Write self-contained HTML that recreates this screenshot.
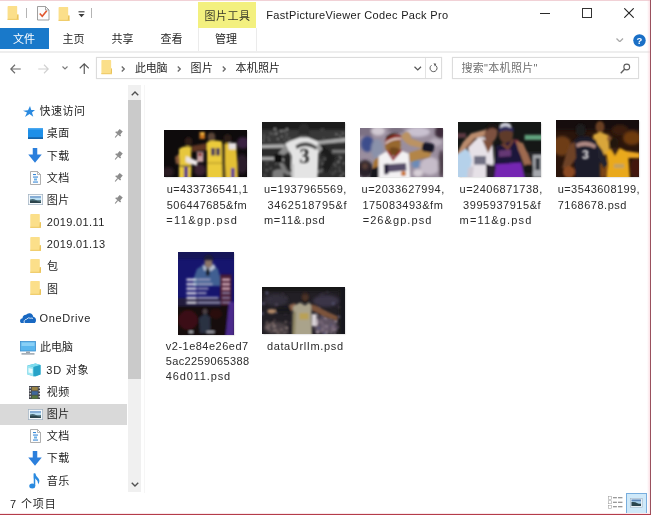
<!DOCTYPE html>
<html lang="zh-CN">
<head>
<meta charset="utf-8">
<title>本机照片</title>
<style>
html,body{margin:0;padding:0;}
body{width:653px;height:516px;overflow:hidden;background:#fff;position:relative;
 font-family:"Liberation Sans","Noto Sans CJK SC",sans-serif;font-size:11px;color:#222;}
.abs{position:absolute;}
svg{position:absolute;display:block;overflow:hidden;}
#win{position:absolute;left:0;top:0;width:650px;height:514px;background:#fff;overflow:hidden;filter:blur(0.35px);}
.t{position:absolute;white-space:nowrap;line-height:16px;height:16px;font-size:11px;color:#1f1f1f;}
.lb{position:absolute;white-space:pre;line-height:16px;height:16px;font-size:11px;color:#2b2b2b;}
#ctxtab{left:198px;top:2px;width:58px;height:26px;background:#f3f07f;}
#ctxl{left:198px;top:28px;width:1px;height:23px;background:#ebebeb;}
#ctxr{left:256px;top:28px;width:1px;height:23px;background:#ebebeb;}
#file{left:0;top:28px;width:49.3px;height:20.5px;background:#1979ca;}
#ribline{left:0;top:51px;width:650px;height:2px;background:#eeeeee;}
.box{position:absolute;border:1px solid #dcdcdc;box-shadow:0 0 1px #e6e6e6;box-sizing:border-box;background:#fff;}
.th{box-shadow:0.5px 0.5px 1.5px rgba(0,0,0,0.28);}
</style>
</head>
<body>
<svg width="0" height="0" style="left:0;top:0">
 <defs>
  <filter id="bl" x="-20%" y="-20%" width="140%" height="140%"><feGaussianBlur stdDeviation="0.8"/></filter>
  <filter id="bl2" x="-20%" y="-20%" width="140%" height="140%"><feGaussianBlur stdDeviation="1.6"/></filter>
 </defs>
</svg>
<div id="win">
  <!-- ===== title bar ===== -->
  <div class="abs" id="ctxtab"></div>
  <div class="abs" id="ctxl"></div><div class="abs" id="ctxr"></div>
    <svg style="left:7px;top:6px" width="12" height="14.3" viewBox="0 0 23 29"><path d="M0.5 1 Q0.5 0 2 0 L19 0 Q20 0 20 1.5 L20 17 L22.5 17 L22.5 28 L0.5 28 Z" fill="#fbdf8a"/><path d="M20 17 L22.5 17 L22.5 28 L19 28 Z" fill="#e9c35c"/><path d="M0.5 26 L22.5 26 L22.5 28.5 L0.5 28.5 Z" fill="#f0cd6c"/></svg>
  <div class="abs" style="left:26px;top:8px;width:1px;height:10px;background:#b4b4b4"></div>
  <svg style="left:37.3px;top:6.3px" width="12.5" height="14.5" viewBox="0 0 25 29"><path d="M1 1 L17 1 L24 8 L24 28 L1 28 Z" fill="#fcfcfc" stroke="#8e8e8e" stroke-width="1.7"/><path d="M17 1 L17 8 L24 8" fill="none" stroke="#8e8e8e" stroke-width="1.5"/><path d="M5.5 15 L10.5 20.5 L19.5 9.5" fill="none" stroke="#e0552c" stroke-width="3.2"/></svg>
  <svg style="left:57.7px;top:6.5px" width="12" height="14.3" viewBox="0 0 23 29"><path d="M0.5 1 Q0.5 0 2 0 L19 0 Q20 0 20 1.5 L20 17 L22.5 17 L22.5 28 L0.5 28 Z" fill="#fbdf8a"/><path d="M20 17 L22.5 17 L22.5 28 L19 28 Z" fill="#e9c35c"/><path d="M0.5 26 L22.5 26 L22.5 28.5 L0.5 28.5 Z" fill="#f0cd6c"/></svg>
  <svg style="left:77.5px;top:11px" width="7" height="7" viewBox="0 0 14 14"><rect x="1" y="0.5" width="12" height="2.2" fill="#3c3c3c"/><path d="M1 6 L13 6 L7 12.5 Z" fill="#3c3c3c"/></svg>
  <div class="abs" style="left:91px;top:8px;width:1px;height:10px;background:#b4b4b4"></div>
  <div class="t" style="left:204.5px;top:7.5px;color:#3a3a2a;letter-spacing:0.5px;">图片工具</div>
  <div class="t" style="left:266.3px;top:7px;letter-spacing:0.33px;color:#1a1a1a;">FastPictureViewer Codec Pack Pro</div>
    <div class="abs" style="left:540px;top:13px;width:10px;height:1px;background:#2a2a2a"></div>
  <div class="abs" style="left:581.5px;top:8px;width:10px;height:10px;border:1px solid #333;box-sizing:border-box"></div>
  <svg style="left:624px;top:8px" width="10" height="10" viewBox="0 0 10 10"><path d="M0.3 0.3 L9.7 9.7 M9.7 0.3 L0.3 9.7" stroke="#222" stroke-width="1.1" fill="none"/></svg>
  <svg style="left:616px;top:37.5px" width="7.5" height="4.5" viewBox="0 0 15 9"><path d="M1 1 L7.5 7.5 L14 1" stroke="#a8a8a8" stroke-width="2.6" fill="none"/></svg>
  <svg style="left:633.3px;top:33.5px" width="13" height="13" viewBox="0 0 26 26"><circle cx="13" cy="13" r="12.5" fill="#1a6fc6"/><text x="13" y="20" text-anchor="middle" font-family="Liberation Sans,sans-serif" font-weight="bold" font-size="19" fill="#fff">?</text></svg>
  <!-- ===== ribbon tabs ===== -->
  <div class="abs" id="file"></div>
  <div class="t" style="left:13px;top:31px;color:#fff;">文件</div>
  <div class="t" style="left:62.5px;top:31px;">主页</div>
  <div class="t" style="left:111.5px;top:31px;">共享</div>
  <div class="t" style="left:160.5px;top:31px;">查看</div>
  <div class="t" style="left:215px;top:31px;">管理</div>
  <div class="abs" id="ribline"></div>
  <!-- ===== address bar ===== -->
  <div class="box" style="left:96px;top:57px;width:346px;height:22px;"></div>
  <div class="abs" style="left:425px;top:58px;width:1px;height:20px;background:#e3e3e3;"></div>
  <div class="box" style="left:452px;top:57px;width:187px;height:22px;"></div>
    <svg style="left:10.2px;top:63.5px" width="11" height="10" viewBox="0 0 22 20"><path d="M10 1.5 L1.5 10 L10 18.5 M2 10 L21.5 10" stroke="#6a6a6a" stroke-width="2.3" fill="none"/></svg>
  <svg style="left:37.7px;top:63.5px" width="11" height="10" viewBox="0 0 22 20"><path d="M12 1.5 L20.5 10 L12 18.5 M20 10 L0.5 10" stroke="#d0d0d0" stroke-width="2.2" fill="none"/></svg>
  <svg style="left:62px;top:66px" width="6" height="4" viewBox="0 0 12 8"><path d="M1 1 L6 6 L11 1" stroke="#7a7a7a" stroke-width="2.2" fill="none"/></svg>
  <svg style="left:78.5px;top:62.7px" width="10.5" height="11.5" viewBox="0 0 21 23"><path d="M1.5 10.5 L10.5 1.7 L19.5 10.5 M10.5 2 L10.5 23" stroke="#555" stroke-width="2.3" fill="none"/></svg>
  <svg style="left:100.7px;top:60.2px" width="11.8" height="14.5" viewBox="0 0 23 29"><path d="M0.5 1 Q0.5 0 2 0 L19 0 Q20 0 20 1.5 L20 17 L22.5 17 L22.5 28 L0.5 28 Z" fill="#fbdf8a"/><path d="M20 17 L22.5 17 L22.5 28 L19 28 Z" fill="#e9c35c"/><path d="M0.5 26 L22.5 26 L22.5 28.5 L0.5 28.5 Z" fill="#f0cd6c"/></svg>
  <svg style="left:121px;top:65.7px" width="4" height="6" viewBox="0 0 8 12"><path d="M1.5 1 L6.5 6 L1.5 11" stroke="#6a6a6a" stroke-width="2.6" fill="none"/></svg>
  <svg style="left:177px;top:65.7px" width="4" height="6" viewBox="0 0 8 12"><path d="M1.5 1 L6.5 6 L1.5 11" stroke="#6a6a6a" stroke-width="2.6" fill="none"/></svg>
  <svg style="left:222px;top:65.7px" width="4" height="6" viewBox="0 0 8 12"><path d="M1.5 1 L6.5 6 L1.5 11" stroke="#6a6a6a" stroke-width="2.6" fill="none"/></svg>
  <svg style="left:414.3px;top:66px" width="7.5" height="5" viewBox="0 0 15 10"><path d="M1 1.5 L7.5 8 L14 1.5" stroke="#555" stroke-width="2.4" fill="none"/></svg>
  <svg style="left:429.3px;top:62.8px" width="9" height="10" viewBox="0 0 18 20"><path d="M12.5 4.2 A7 7 0 1 1 5 4.6" stroke="#5a5a5a" stroke-width="2" fill="none"/><path d="M9 0.5 L14.5 1.5 L12 7 Z" fill="#5a5a5a"/></svg>
  <svg style="left:620px;top:62.8px" width="11" height="11" viewBox="0 0 22 22"><circle cx="13.5" cy="8" r="5.8" stroke="#5f5f5f" stroke-width="2.2" fill="none"/><path d="M9.5 12.2 L1.5 20.5" stroke="#5f5f5f" stroke-width="2.8" fill="none"/></svg>
  <div class="t" style="left:135px;top:60px;letter-spacing:-0.3px;">此电脑</div>
  <div class="t" style="left:190.5px;top:60px;letter-spacing:0.5px;">图片</div>
  <div class="t" style="left:235.5px;top:60px;letter-spacing:0.2px;">本机照片</div>
  <div class="t" style="left:461.5px;top:60px;color:#707070;letter-spacing:0.3px;">搜索"本机照片"</div>
  <!-- ===== nav pane ===== -->
  <div class="abs" style="left:0;top:403.5px;width:127px;height:21.5px;background:#d9d9d9;"></div>
  <div class="t" style="left:39.5px;top:103px;letter-spacing:0.5px;">快速访问</div>
  <div class="t" style="left:46.7px;top:125px;letter-spacing:0.6px;">桌面</div>
  <div class="t" style="left:46.7px;top:147.5px;letter-spacing:0.6px;">下载</div>
  <div class="t" style="left:46.7px;top:169.5px;letter-spacing:0.6px;">文档</div>
  <div class="t" style="left:46.7px;top:191.5px;letter-spacing:0.6px;">图片</div>
  <div class="t" style="left:46.7px;top:214px;letter-spacing:0.38px;">2019.01.11</div>
  <div class="t" style="left:46.7px;top:236px;letter-spacing:0.38px;">2019.01.13</div>
  <div class="t" style="left:47px;top:258px;">包</div>
  <div class="t" style="left:47px;top:280.5px;">图</div>
  <div class="t" style="left:39.5px;top:310px;letter-spacing:0.62px;">OneDrive</div>
  <div class="t" style="left:40px;top:339px;">此电脑</div>
  <div class="t" style="left:46.3px;top:361.5px;letter-spacing:0.8px;">3D 对象</div>
  <div class="t" style="left:46.7px;top:383.5px;letter-spacing:0.6px;">视频</div>
  <div class="t" style="left:46.7px;top:405.5px;letter-spacing:0.6px;">图片</div>
  <div class="t" style="left:46.7px;top:428px;letter-spacing:0.6px;">文档</div>
  <div class="t" style="left:46.7px;top:450px;letter-spacing:0.6px;">下载</div>
  <div class="t" style="left:46.7px;top:472.5px;letter-spacing:0.6px;">音乐</div>
    <svg style="left:23px;top:106px" width="12" height="11" viewBox="0 0 24 22"><path d="M14 0 L16.5 8 L24 8 L18 12.8 L20.5 21.5 L13 16 L4 22 L8 13 L0 9.5 L10 8.5 Z" fill="#2a8ae0"/></svg>
  <svg style="left:27.7px;top:127.5px" width="15" height="11" viewBox="0 0 30 22"><rect x="0" y="0" width="30" height="22" fill="#1d8fe8"/><rect x="0" y="0" width="30" height="3" fill="#4aa8f0"/><rect x="0" y="18.5" width="30" height="3.5" fill="#1663a8"/></svg>
  <svg style="left:113px;top:127.6px" width="10" height="12" viewBox="0 0 20 24"><g transform="rotate(40 10 12)" fill="#8c8c8c"><rect x="6" y="2" width="8" height="9"/><rect x="3.5" y="10" width="13" height="3"/><rect x="9" y="13" width="2.2" height="8"/></g></svg>
  <svg style="left:28.3px;top:147.7px" width="14" height="15" viewBox="0 0 28 30"><path d="M9.5 0 L18.5 0 L18.5 13 L27.5 13 L14 29.5 L0.5 13 L9.5 13 Z" fill="#2b7fdc"/></svg>
  <svg style="left:113px;top:149.8px" width="10" height="12" viewBox="0 0 20 24"><g transform="rotate(40 10 12)" fill="#8c8c8c"><rect x="6" y="2" width="8" height="9"/><rect x="3.5" y="10" width="13" height="3"/><rect x="9" y="13" width="2.2" height="8"/></g></svg>
  <svg style="left:29.6px;top:170.5px" width="11" height="14" viewBox="0 0 22 28"><path d="M1 1 L15 1 L21 7 L21 27 L1 27 Z" fill="#fdfdfd" stroke="#9a9a9a" stroke-width="1.6"/><path d="M15 1 L15 7 L21 7" fill="none" stroke="#9a9a9a" stroke-width="1.4"/><rect x="6" y="6" width="6" height="2.2" fill="#3a8ad8"/><rect x="6" y="11" width="10" height="2.2" fill="#3a8ad8"/><rect x="8" y="15" width="6" height="4" fill="#6ab0e8"/><rect x="6" y="21" width="10" height="2.2" fill="#3a8ad8"/></svg>
  <svg style="left:113px;top:172.2px" width="10" height="12" viewBox="0 0 20 24"><g transform="rotate(40 10 12)" fill="#8c8c8c"><rect x="6" y="2" width="8" height="9"/><rect x="3.5" y="10" width="13" height="3"/><rect x="9" y="13" width="2.2" height="8"/></g></svg>
  <svg style="left:27.6px;top:194px" width="15" height="11" viewBox="0 0 30 22"><rect x="0.7" y="0.7" width="28.6" height="20.6" fill="#f4f8fb" stroke="#9fb0c0" stroke-width="1.4"/><rect x="4" y="4" width="22" height="14" fill="#b9def3"/><rect x="4" y="4" width="22" height="4" fill="#86aed6"/><path d="M4 11 Q10 9 16 12 Q22 13 26 12 L26 18 L4 18 Z" fill="#4a6c76"/><path d="M4 14 Q12 12.5 26 16.5 L26 18 L4 18 Z" fill="#2c444c"/></svg>
  <svg style="left:113px;top:194px" width="10" height="12" viewBox="0 0 20 24"><g transform="rotate(40 10 12)" fill="#8c8c8c"><rect x="6" y="2" width="8" height="9"/><rect x="3.5" y="10" width="13" height="3"/><rect x="9" y="13" width="2.2" height="8"/></g></svg>
  <svg style="left:29.7px;top:214.3px" width="11.3" height="14.2" viewBox="0 0 23 29"><path d="M0.5 1 Q0.5 0 2 0 L19 0 Q20 0 20 1.5 L20 17 L22.5 17 L22.5 28 L0.5 28 Z" fill="#fbdf8a"/><path d="M20 17 L22.5 17 L22.5 28 L19 28 Z" fill="#e9c35c"/><path d="M0.5 26 L22.5 26 L22.5 28.5 L0.5 28.5 Z" fill="#f0cd6c"/></svg>
  <svg style="left:29.7px;top:236.5px" width="11.3" height="14.2" viewBox="0 0 23 29"><path d="M0.5 1 Q0.5 0 2 0 L19 0 Q20 0 20 1.5 L20 17 L22.5 17 L22.5 28 L0.5 28 Z" fill="#fbdf8a"/><path d="M20 17 L22.5 17 L22.5 28 L19 28 Z" fill="#e9c35c"/><path d="M0.5 26 L22.5 26 L22.5 28.5 L0.5 28.5 Z" fill="#f0cd6c"/></svg>
  <svg style="left:29.7px;top:258.7px" width="11.3" height="14.2" viewBox="0 0 23 29"><path d="M0.5 1 Q0.5 0 2 0 L19 0 Q20 0 20 1.5 L20 17 L22.5 17 L22.5 28 L0.5 28 Z" fill="#fbdf8a"/><path d="M20 17 L22.5 17 L22.5 28 L19 28 Z" fill="#e9c35c"/><path d="M0.5 26 L22.5 26 L22.5 28.5 L0.5 28.5 Z" fill="#f0cd6c"/></svg>
  <svg style="left:29.7px;top:281px" width="11.3" height="14.2" viewBox="0 0 23 29"><path d="M0.5 1 Q0.5 0 2 0 L19 0 Q20 0 20 1.5 L20 17 L22.5 17 L22.5 28 L0.5 28 Z" fill="#fbdf8a"/><path d="M20 17 L22.5 17 L22.5 28 L19 28 Z" fill="#e9c35c"/><path d="M0.5 26 L22.5 26 L22.5 28.5 L0.5 28.5 Z" fill="#f0cd6c"/></svg>
  <svg style="left:19.5px;top:312.5px" width="16" height="10.5" viewBox="0 0 32 21"><path d="M6 21 Q0 21 0 15.5 Q0 11 5 10.5 Q5.5 4 12 3.5 Q15 0 19.5 0.5 Q25 1 26.5 7.5 Q32 8.5 32 14.5 Q32 21 25.5 21 Z" fill="#1868c2"/><path d="M9 21 Q6 14 13 12.5 Q16 8 21.5 10.5 Q24 9.5 26 11" fill="none" stroke="#fff" stroke-width="1.6"/></svg>
  <svg style="left:19.5px;top:341px" width="16" height="14" viewBox="0 0 32 28"><rect x="1" y="1" width="30" height="19" fill="#5bb7ee" stroke="#3d8fcc" stroke-width="1.6"/><rect x="3" y="3" width="26" height="7" fill="#8ad0f6"/><rect x="12" y="21" width="8" height="3" fill="#9aa4ae"/><rect x="3" y="24.5" width="26" height="2.6" fill="#8b96a2"/></svg>
  <svg style="left:27.3px;top:362.8px" width="14" height="14" viewBox="0 0 28 28"><path d="M1 5 L17 1 L27 4 L27 23 L17 27 L1 23 Z" fill="#38b7d8"/><path d="M1 5 L17 1 L27 4 L13 8 Z" fill="#7fdcee"/><path d="M1 5 L13 8 L13 27 L1 23 Z" fill="#9be6f2"/><path d="M3 10 L11 12 L11 21 L3 19 Z" fill="#e8fbfd"/><path d="M13 8 L27 4 L27 23 L13 27 Z" fill="#27a3c8"/></svg>
  <svg style="left:28.7px;top:385.6px" width="11.5" height="13.5" viewBox="0 0 23 27"><rect x="0" y="0" width="23" height="27" fill="#45474d"/><rect x="5.5" y="2" width="12" height="7" fill="#9a8446"/><rect x="5.5" y="10.5" width="12" height="7" fill="#3f689c"/><rect x="5.5" y="19" width="12" height="6.5" fill="#56763f"/><g fill="#e4e6ea"><rect x="1.2" y="2" width="2.4" height="3"/><rect x="1.2" y="8" width="2.4" height="3"/><rect x="1.2" y="14" width="2.4" height="3"/><rect x="1.2" y="20" width="2.4" height="3"/><rect x="19.4" y="2" width="2.4" height="3"/><rect x="19.4" y="8" width="2.4" height="3"/><rect x="19.4" y="14" width="2.4" height="3"/><rect x="19.4" y="20" width="2.4" height="3"/></g></svg>
  <svg style="left:27.8px;top:408.5px" width="15" height="11" viewBox="0 0 30 22"><rect x="0.7" y="0.7" width="28.6" height="20.6" fill="#f4f8fb" stroke="#9fb0c0" stroke-width="1.4"/><rect x="4" y="4" width="22" height="14" fill="#b9def3"/><rect x="4" y="4" width="22" height="4" fill="#86aed6"/><path d="M4 11 Q10 9 16 12 Q22 13 26 12 L26 18 L4 18 Z" fill="#4a6c76"/><path d="M4 14 Q12 12.5 26 16.5 L26 18 L4 18 Z" fill="#2c444c"/></svg>
  <svg style="left:29.5px;top:429px" width="11" height="14" viewBox="0 0 22 28"><path d="M1 1 L15 1 L21 7 L21 27 L1 27 Z" fill="#fdfdfd" stroke="#9a9a9a" stroke-width="1.6"/><path d="M15 1 L15 7 L21 7" fill="none" stroke="#9a9a9a" stroke-width="1.4"/><rect x="6" y="6" width="6" height="2.2" fill="#3a8ad8"/><rect x="6" y="11" width="10" height="2.2" fill="#3a8ad8"/><rect x="8" y="15" width="6" height="4" fill="#6ab0e8"/><rect x="6" y="21" width="10" height="2.2" fill="#3a8ad8"/></svg>
  <svg style="left:28.3px;top:450.8px" width="14" height="15" viewBox="0 0 28 30"><path d="M9.5 0 L18.5 0 L18.5 13 L27.5 13 L14 29.5 L0.5 13 L9.5 13 Z" fill="#2b7fdc"/></svg>
  <svg style="left:29.3px;top:472.5px" width="11" height="16" viewBox="0 0 22 32"><ellipse cx="6.5" cy="26" rx="6" ry="5" fill="#2a8ae0"/><rect x="9.5" y="1" width="3" height="25" fill="#2a8ae0"/><path d="M9.5 1 L12.5 1 Q14 7 19 11 Q23 16 18 23 Q19 16 12.5 11 L9.5 11 Z" fill="#2a8ae0"/></svg>
  <!-- scrollbar -->
  <div class="abs" style="left:127.7px;top:85px;width:13.8px;height:407px;background:#f0f0f0;"></div>
  <div class="abs" style="left:127.7px;top:100px;width:13.8px;height:278.5px;background:#cacaca;"></div>
  <div class="abs" style="left:144px;top:85px;width:1px;height:408px;background:#f6f6f6;"></div>
    <svg style="left:131px;top:90.5px" width="8" height="5" viewBox="0 0 16 10"><path d="M1.5 8.5 L8 2 L14.5 8.5" stroke="#505050" stroke-width="2.8" fill="none"/></svg>
  <svg style="left:131px;top:481.5px" width="8" height="5" viewBox="0 0 16 10"><path d="M1.5 1.5 L8 8 L14.5 1.5" stroke="#505050" stroke-width="2.8" fill="none"/></svg>
  <!-- ===== status bar ===== -->
  <div class="t" style="left:10px;top:496px;letter-spacing:0.9px;">7 个项目</div>
    <svg style="left:608px;top:496px" width="15" height="13" viewBox="0 0 27 26" preserveAspectRatio="none"><g fill="none" stroke="#9a9a9a" stroke-width="1"><rect x="0.5" y="0.5" width="6" height="6"/><rect x="0.5" y="9.5" width="6" height="6"/><rect x="0.5" y="18.5" width="6" height="6"/></g><g fill="#7a7a7a"><rect x="9" y="2.5" width="7" height="2"/><rect x="18" y="2.5" width="8" height="2"/><rect x="9" y="11.5" width="7" height="2"/><rect x="18" y="11.5" width="8" height="2"/><rect x="9" y="20.5" width="7" height="2"/><rect x="18" y="20.5" width="8" height="2"/></g></svg>
  <div class="abs" style="left:626px;top:492.5px;width:20.5px;height:21.5px;background:#cfe9f9;border:1px solid #78aede;box-sizing:border-box"></div>
  <svg style="left:630px;top:498px" width="12.5" height="9.5" viewBox="0 0 25 19"><rect x="0.6" y="0.6" width="23.8" height="17.8" fill="#f2f7fb" stroke="#9ab0c4" stroke-width="1.2"/><rect x="3" y="3" width="19" height="13" fill="#a8cfea"/><rect x="3" y="3" width="19" height="3.5" fill="#5e86b8"/><path d="M3 8 Q10 7 15 10.5 Q19 12 22 11.5 L22 16 L3 16 Z" fill="#2b454e"/></svg>
  <!-- ===== thumbnails ===== -->
  <!--THUMBS_BEGIN-->
  <!-- thumb 1: three players in yellow -->
  <svg class="th" style="left:164px;top:130px" width="83" height="47" viewBox="0 0 83 47">
   <rect width="83" height="47" fill="#0e0b0c"/>
   <g filter="url(#bl2)">
    <ellipse cx="79" cy="13" rx="6" ry="6" fill="#3a2142"/>
    <ellipse cx="78" cy="34" rx="6" ry="10" fill="#2a1b2a"/>
    <ellipse cx="4" cy="42" rx="6" ry="5" fill="#2a1c22"/>
    <ellipse cx="36" cy="40" rx="6" ry="6" fill="#3a2030"/>
   </g>
   <g filter="url(#bl)">
    <rect x="35.5" y="2" width="5.5" height="7" fill="#c8731f"/>
    <rect x="36.5" y="2" width="3.5" height="3" fill="#e8b040"/>
    <rect x="33" y="22" width="6.5" height="10" fill="#c9a3a3"/>
    <rect x="34" y="23" width="4" height="3" fill="#8a2a2a"/>
    <!-- centre player's arm across -->
    <path d="M27 16 L43 13 L44 20 L28 22 Z" fill="#5f3624"/>
    <!-- left player -->
    <ellipse cx="24.5" cy="11.5" rx="3.8" ry="4.6" fill="#2e1d16"/>
    <path d="M15 19 Q20 15 27 17 L27.5 36 L27 50 L15 50 L15 36 Z" fill="#e7c73c"/>
    <path d="M11 27 L15 24 L16 34 L12 34 Z" fill="#8a5a3a"/>
    <path d="M22 26 L33.5 31 L33 36 L21.5 32 Z" fill="#ebe5e6"/>
    <rect x="20.2" y="37" width="3.6" height="13" fill="#4e3391"/>
    <rect x="15" y="35.5" width="12.5" height="1.2" fill="#5a4a2a"/>
    <!-- centre player -->
    <ellipse cx="47.5" cy="7" rx="3.8" ry="4.4" fill="#5a4538"/>
    <path d="M43 12 Q50 9.5 58 11.5 L58.5 33 L59 50 L43 50 L43 33 Z" fill="#ebcb3a"/>
    <rect x="47" y="18" width="4" height="7.5" fill="#4a3a5a"/><rect x="52" y="18" width="4" height="7.5" fill="#4a3a5a"/>
    <rect x="43" y="32.5" width="15.5" height="1.2" fill="#b89a2a"/>
    <!-- right player -->
    <ellipse cx="63.5" cy="8.5" rx="4" ry="4.6" fill="#2a1c18"/>
    <path d="M60.5 13.5 L72 13 L73.5 34 L74 50 L61.5 50 L61 34 Z" fill="#e4c036"/>
    <path d="M64.6 12.7 L72.4 13 L72.4 19.6 L65 19.6 Z" fill="#e6e0e2"/>
    <rect x="67" y="38" width="3.6" height="12" fill="#5a3a96"/>
    <rect x="58.7" y="14" width="2" height="34" fill="#1d1320"/>
   </g>
  </svg>
  <!-- thumb 2: grayscale #3 back -->
  <svg class="th" style="left:262px;top:122px" width="83" height="55" viewBox="0 0 83 55">
   <rect width="83" height="55" fill="#2e2e2e"/>
   <g filter="url(#bl)">
    <rect x="-3" y="-3" width="90" height="11" fill="#1f1f1f"/>
    <rect x="-3" y="8" width="90" height="14" fill="#383838"/>
    <circle cx="19.8" cy="14.6" r="1.0" fill="#7c7c7c"/><circle cx="1.1" cy="18.7" r="1.0" fill="#6e6e6e"/><circle cx="15.9" cy="17.0" r="1.1" fill="#7c7c7c"/><circle cx="19.2" cy="9.1" r="1.4" fill="#7c7c7c"/><circle cx="61.5" cy="16.4" r="0.8" fill="#5a5a5a"/><circle cx="25.0" cy="7.4" r="1.3" fill="#7c7c7c"/><circle cx="11.1" cy="12.1" r="0.8" fill="#7c7c7c"/><circle cx="18.0" cy="20.5" r="1.1" fill="#4c4c4c"/><circle cx="28.0" cy="19.8" r="0.8" fill="#4c4c4c"/><circle cx="82.3" cy="16.4" r="0.9" fill="#4c4c4c"/><circle cx="80.1" cy="19.7" r="1.1" fill="#6e6e6e"/><circle cx="22.2" cy="8.7" r="1.1" fill="#7c7c7c"/><circle cx="7.3" cy="18.2" r="1.0" fill="#6e6e6e"/><circle cx="1.7" cy="13.0" r="1.0" fill="#5a5a5a"/><circle cx="3.7" cy="15.6" r="0.8" fill="#4c4c4c"/><circle cx="23.2" cy="10.3" r="0.8" fill="#5a5a5a"/><circle cx="6.4" cy="15.4" r="0.8" fill="#6e6e6e"/><circle cx="80.6" cy="11.1" r="1.0" fill="#5a5a5a"/><circle cx="81.3" cy="11.8" r="1.0" fill="#6e6e6e"/><circle cx="74.4" cy="12.3" r="1.1" fill="#7c7c7c"/><circle cx="78.1" cy="14.1" r="1.1" fill="#6e6e6e"/><circle cx="77.7" cy="13.1" r="1.0" fill="#4c4c4c"/><circle cx="1.7" cy="15.6" r="1.2" fill="#5a5a5a"/><circle cx="29.3" cy="19.8" r="1.2" fill="#4c4c4c"/><circle cx="61.3" cy="7.3" r="0.8" fill="#5a5a5a"/><circle cx="80.0" cy="10.5" r="1.1" fill="#4c4c4c"/><circle cx="14.7" cy="9.6" r="1.3" fill="#4c4c4c"/><circle cx="24.9" cy="12.3" r="1.3" fill="#5a5a5a"/><circle cx="80.6" cy="16.6" r="0.9" fill="#6e6e6e"/><circle cx="27.2" cy="16.5" r="1.2" fill="#5a5a5a"/><circle cx="8.5" cy="11.5" r="1.0" fill="#6e6e6e"/><circle cx="14.1" cy="11.7" r="1.2" fill="#7c7c7c"/><circle cx="22.5" cy="18.0" r="0.8" fill="#6e6e6e"/><circle cx="26.2" cy="18.7" r="1.1" fill="#4c4c4c"/><circle cx="28.2" cy="18.6" r="0.9" fill="#4c4c4c"/><circle cx="24.1" cy="15.0" r="0.8" fill="#7c7c7c"/><circle cx="12.9" cy="7.1" r="1.4" fill="#7c7c7c"/><circle cx="59.5" cy="7.5" r="1.1" fill="#4c4c4c"/><circle cx="70.7" cy="52.6" r="1.5" fill="#3c3c3c"/><circle cx="59.2" cy="38.4" r="0.9" fill="#5e5e5e"/><circle cx="80.2" cy="52.8" r="1.3" fill="#4a4a4a"/><circle cx="69.0" cy="35.7" r="1.3" fill="#5e5e5e"/><circle cx="73.9" cy="44.5" r="1.2" fill="#4a4a4a"/><circle cx="65.2" cy="38.6" r="1.5" fill="#6a6a6a"/><circle cx="77.9" cy="34.4" r="1.1" fill="#4a4a4a"/><circle cx="70.4" cy="51.0" r="1.0" fill="#3c3c3c"/><circle cx="80.9" cy="50.7" r="1.5" fill="#4a4a4a"/><circle cx="69.2" cy="45.6" r="1.2" fill="#3c3c3c"/><circle cx="62.7" cy="46.6" r="1.3" fill="#4a4a4a"/><circle cx="68.8" cy="50.1" r="0.9" fill="#4a4a4a"/><circle cx="76.9" cy="34.0" r="0.9" fill="#6a6a6a"/><circle cx="82.3" cy="51.8" r="1.0" fill="#6a6a6a"/><circle cx="64.5" cy="39.9" r="1.1" fill="#6a6a6a"/><circle cx="71.8" cy="40.9" r="1.0" fill="#3c3c3c"/><circle cx="67.6" cy="35.8" r="0.9" fill="#6a6a6a"/><circle cx="77.5" cy="45.5" r="0.9" fill="#6a6a6a"/><circle cx="72.3" cy="50.2" r="1.2" fill="#4a4a4a"/><circle cx="72.8" cy="42.5" r="1.2" fill="#6a6a6a"/><circle cx="76.5" cy="39.9" r="1.6" fill="#6a6a6a"/><circle cx="68.4" cy="38.4" r="1.3" fill="#4a4a4a"/><circle cx="77.7" cy="37.9" r="1.0" fill="#4a4a4a"/><circle cx="81.3" cy="41.2" r="1.5" fill="#3c3c3c"/><circle cx="59.3" cy="48.2" r="1.6" fill="#6a6a6a"/><circle cx="74.0" cy="49.1" r="1.3" fill="#4a4a4a"/><circle cx="77.9" cy="48.8" r="1.2" fill="#5e5e5e"/><circle cx="76.9" cy="34.0" r="1.0" fill="#4a4a4a"/><circle cx="73.8" cy="41.3" r="1.5" fill="#3c3c3c"/><circle cx="78.7" cy="35.7" r="1.5" fill="#6a6a6a"/><circle cx="78.6" cy="54.0" r="1.3" fill="#4a4a4a"/><circle cx="57.0" cy="49.9" r="1.3" fill="#5e5e5e"/><circle cx="58.9" cy="49.5" r="1.6" fill="#4a4a4a"/><circle cx="70.9" cy="52.1" r="1.0" fill="#4a4a4a"/><circle cx="62.5" cy="37.0" r="1.1" fill="#6a6a6a"/><circle cx="62.8" cy="46.2" r="1.6" fill="#6a6a6a"/><circle cx="82.1" cy="41.3" r="1.1" fill="#6a6a6a"/><circle cx="78.8" cy="54.3" r="1.2" fill="#6a6a6a"/><circle cx="60.2" cy="41.8" r="1.5" fill="#5e5e5e"/><circle cx="58.6" cy="49.5" r="1.5" fill="#6a6a6a"/><circle cx="15.2" cy="52.9" r="1.0" fill="#5e5e5e"/><circle cx="3.8" cy="47.7" r="1.6" fill="#3c3c3c"/><circle cx="17.5" cy="52.8" r="1.3" fill="#3c3c3c"/><circle cx="23.1" cy="44.6" r="1.1" fill="#6a6a6a"/><circle cx="5.2" cy="48.5" r="1.1" fill="#6a6a6a"/><circle cx="20.1" cy="42.2" r="1.6" fill="#6a6a6a"/><circle cx="18.2" cy="43.1" r="1.3" fill="#4a4a4a"/><circle cx="12.5" cy="50.8" r="1.5" fill="#6a6a6a"/><circle cx="20.4" cy="53.2" r="0.9" fill="#5e5e5e"/><circle cx="23.2" cy="49.7" r="1.4" fill="#4a4a4a"/><circle cx="24.9" cy="52.8" r="1.1" fill="#5e5e5e"/><circle cx="20.2" cy="42.1" r="1.3" fill="#4a4a4a"/><circle cx="23.4" cy="43.8" r="1.5" fill="#3c3c3c"/><circle cx="4.8" cy="41.4" r="1.5" fill="#4a4a4a"/><circle cx="2.4" cy="52.5" r="1.1" fill="#3c3c3c"/><circle cx="11.8" cy="51.0" r="1.1" fill="#4a4a4a"/><circle cx="8.7" cy="46.5" r="1.2" fill="#5e5e5e"/><circle cx="16.8" cy="51.1" r="1.2" fill="#5e5e5e"/><circle cx="14.2" cy="41.8" r="1.1" fill="#6a6a6a"/><circle cx="2.9" cy="53.3" r="1.5" fill="#4a4a4a"/><circle cx="13.7" cy="50.5" r="1.4" fill="#3c3c3c"/><circle cx="19.7" cy="44.4" r="1.4" fill="#3c3c3c"/><circle cx="2.8" cy="54.2" r="1.1" fill="#4a4a4a"/><circle cx="17.3" cy="47.6" r="0.9" fill="#3c3c3c"/><circle cx="17.6" cy="48.5" r="1.0" fill="#5e5e5e"/>
    <path d="M-3 23 L26 22.5 L26 25.5 L-3 26 Z" fill="#bdbdbd"/>
    <path d="M56 19 L86 15.5 L86 19.5 L56 22.5 Z" fill="#a8a8a8"/>
    <rect x="-3" y="26.5" width="30" height="8" fill="#2a2a2a"/>
    <rect x="58" y="22.5" width="28" height="6" fill="#2c2c2c"/>
    <rect x="-3" y="35" width="15" height="3.4" fill="#a8a8a8"/>
    <rect x="20" y="35.5" width="8" height="3.4" fill="#c4c4c4"/>
    <rect x="70" y="27.7" width="16" height="3.6" fill="#747474"/>
    <path d="M10.6 49 Q16 45.5 21 48 L22 58 L10 58 Z" fill="#7c7c7c"/>
    <!-- arms -->
    <path d="M24.5 20 L31 19 L28 29 L21 33.5 L16 32 Z" fill="#8c8c8c"/>
    <path d="M16 40 L21 40.5 L25 48 L29 50 L29 54 L21 51 Z" fill="#7a7a7a"/>
    <rect x="12" y="32" width="8.5" height="9" rx="2" fill="#111"/>
    <path d="M21 35 L28 33 L29 47 L24.5 46 Z" fill="#232323"/>
    <path d="M57 22 L61 24 L70 31 L73 36 L68 47 L63 50 L60 44 L65 36 L59 31 Z" fill="#1d1d1d"/>
    <!-- head -->
    <ellipse cx="42" cy="9" rx="5.8" ry="7.6" fill="#2b2b2b"/>
    <rect x="37.5" y="13" width="8" height="6" fill="#4c4c4c"/>
    <!-- jersey -->
    <path d="M23.5 22 L28 19 L38 15.5 L46 15.5 L56 19.5 L60 27 L56.5 31 L55.5 58 L29 58 L29.5 34 Z" fill="#e4e4e4"/>
    <path d="M56 20 L60 27 L57 31 L55 26Z" fill="#9a9a9a"/>
    <path d="M29 42 L32 42 L32 58 L29 58Z" fill="#c4c4c4"/>
    <path d="M33.5 23.5 Q43.5 16.5 55 24.5 L54 28 Q43.5 21 34.5 27 Z" fill="#4a4a4a"/>
   </g>
   <text x="37.5" y="41" font-family="Liberation Serif,serif" font-weight="bold" font-size="20" fill="#262626" filter="url(#bl)">3</text>
  </svg>
  <!-- thumb 3: 76ers white jersey, hand to ear -->
  <svg class="th" style="left:360px;top:128px" width="83" height="49" viewBox="0 0 83 49">
   <rect width="83" height="49" fill="#9a8e9e"/>
   <g filter="url(#bl2)">
    <rect x="-4" y="-4" width="18" height="12" fill="#7d7184"/>
    <ellipse cx="7.5" cy="16" rx="6.5" ry="8" fill="#3e4d8c"/>
    <ellipse cx="17" cy="21" rx="6" ry="10" fill="#8a92aa"/>
    <ellipse cx="18" cy="3" rx="7" ry="4.5" fill="#d2cad3"/>
    <ellipse cx="5" cy="41" rx="8" ry="9" fill="#2c2129"/>
    <ellipse cx="5" cy="38" rx="3" ry="3" fill="#5a4038"/>
    <ellipse cx="58" cy="4" rx="12" ry="5" fill="#c9c1d0"/>
    <ellipse cx="80" cy="4" rx="5" ry="7" fill="#3c2c3a"/>
    <ellipse cx="76" cy="14" rx="6" ry="4" fill="#b8adbb"/>
    <ellipse cx="70" cy="38" rx="10" ry="9" fill="#c6bcc9"/>
    <ellipse cx="62" cy="28" rx="5" ry="3" fill="#8c7383"/>
    <ellipse cx="56" cy="35.5" rx="4.2" ry="5" fill="#6c8bb8"/>
    <ellipse cx="58" cy="45" rx="5" ry="4" fill="#d8d0d8"/>
    <ellipse cx="81.5" cy="36" rx="3" ry="14" fill="#4c3c4a"/>
    <ellipse cx="36" cy="2" rx="8" ry="3" fill="#7a6f80"/>
   </g>
   <g filter="url(#bl)">
    <!-- upper arm + forearm -->
    <path d="M48.6 25 L58 22 L66 20 L72 23 L69.6 29 L60 31 L50 34 Z" fill="#b38546"/>
    <path d="M41 9 Q43 4 48 4 L50.5 7 L51 10.5 L64 15 L62.5 20.5 L50 17.5 L45 14 Z" fill="#bb9364"/>
    <rect x="62" y="15" width="12" height="9" rx="3" fill="#181626" transform="rotate(10 68 19.5)"/>
    <!-- head -->
    <ellipse cx="33" cy="17" rx="7.8" ry="10.2" fill="#97672f"/>
    <path d="M29.5 20 Q34.5 18 39.5 21 L38.5 26 Q34.5 29 30.5 26Z" fill="#71471f"/>
    <path d="M25 13 Q31 4.5 41 7.6 L41.3 12.6 Q32 10 25.6 17 Z" fill="#8b2a24"/>
    <path d="M25.3 14.8 Q32 9 41.2 10 L41.2 11.6 Q32 10.8 25.6 16.4 Z" fill="#e9dcd6"/>
    <path d="M26 9.6 Q32 2.8 40.5 6.2 Q32 5.2 26.5 11.6Z" fill="#2b1c18"/>
    <!-- left shoulder / sleeve -->
    <path d="M14 33 L20 27.5 L23 52 L10 52 Z" fill="#a67232"/>
    <path d="M11 41 L20.5 38 L22 52 L9 52 Z" fill="#17151c"/>
    <!-- jersey -->
    <path d="M18.5 28 L27 23 L33 31 L41 22.5 L48.6 25.5 L50.5 52 L18.5 52 Z" fill="#f3f1f3"/>
    <path d="M26.5 23 L33 33 L42.5 22.5 L40.5 21.5 L33 30 L28.5 22 Z" fill="#9c2c2c"/>
    <path d="M23.8 36.5 L46 35 L46.5 42.5 L24.3 44.5 Z" fill="#34284a" opacity="0.82"/>
    <path d="M24 37 L28 35.5 L28.5 46 L24.5 46.5Z" fill="#241a34"/>
    <ellipse cx="43.5" cy="45.5" rx="2.6" ry="2.6" fill="#c9773a"/>
   </g>
  </svg>
  <!-- thumb 4: white jersey + purple jersey -->
  <svg class="th" style="left:458px;top:122px" width="83" height="55" viewBox="0 0 83 55">
   <rect width="83" height="55" fill="#151716"/>
   <g filter="url(#bl)">
    <rect x="-3" y="11" width="11" height="5" fill="#5a3840"/>
    <rect x="66.6" y="12.8" width="20" height="5.2" fill="#5fa07c"/>
    <rect x="60" y="30" width="26" height="28" fill="#25272a"/>
    <rect x="75" y="33" width="11" height="22" fill="#a6a8ad"/>
    <rect x="77.5" y="36" width="4.5" height="12" fill="#33343c"/>
    <!-- left player arm -->
    <path d="M-2 33 L5 20 L13 11.5 L28 7.5 L29 13.5 L16 17 L9 25 L3 36 Z" fill="#b98b6d"/>
    <path d="M9 24 L17 17 L21 22 L18 32 L11 32 Z" fill="#7b4c39"/>
    <!-- sleeve -->
    <path d="M-3 34 L8 26.5 L15 34 L12 58 L-3 58 Z" fill="#b5d1ea"/>
    <!-- white jersey -->
    <path d="M10 26 L20 15.5 L26 15 L35 24 L36 40 L31 58 L10 58 L14 38 Z" fill="#e6e1e7"/>
    <path d="M24 17 L30 31 L35.5 21 Z" fill="#7e503b"/>
    <path d="M16 34 L28 34 L28 42.6 L16 42.6 Z" fill="#4a4862" opacity="0.75"/>
    <path d="M10 46 L16 44 L14 58 L9 58Z" fill="#cfc9d3"/>
    <!-- heads -->
    <ellipse cx="33" cy="11.5" rx="6.3" ry="9.5" fill="#7d5140" transform="rotate(12 33 11.5)"/>
    <path d="M28 5 Q34 -2 41 5 L40 9 Q34 3 28.5 9Z" fill="#1b1412"/>
    <ellipse cx="48" cy="12" rx="7.2" ry="9.6" fill="#5e3b2b"/>
    <path d="M41 5.5 Q48 1 55.5 5.5 L55.5 10 Q48 6.5 41 10.5 Z" fill="#2c2a5c"/>
    <path d="M42 2.5 Q47.5 -1.5 53 2.5 L53 6 Q47.5 2.5 42 6Z" fill="#cfd0dc"/>
    <!-- right player -->
    <path d="M38 24 L46 22 L57 17 L62 22 L63 41 L36 43 L38 34 Z" fill="#1f153a"/>
    <path d="M36 42.5 L63 40.5 L67 58 L34 58 Z" fill="#7428b2"/>
    <path d="M42.5 22 L50 29 L56.5 18 L54 17 L50 24 L46 21Z" fill="#6e4030"/>
    <path d="M41 28.5 L53 27.7 L53 34.3 L41 35 Z" fill="#6d3b7b" opacity="0.9"/>
    <path d="M56 17 L61 18 L62 23 L58 22Z" fill="#7a2a3a"/>
    <path d="M58 19 L65 21 L69 30 L74 43 L67 45 L63 34 L60 27 Z" fill="#9f6a50"/>
    <rect x="66.6" y="42.6" width="8.6" height="8.4" rx="2" fill="#161314"/>
    <path d="M28 42 L38 44 L36 58 L28 58 Z" fill="#2a2233"/>
   </g>
  </svg>
  <!-- thumb 5: navy #3 vs yellow -->
  <svg class="th" style="left:556px;top:120px" width="83" height="57" viewBox="0 0 83 57">
   <rect width="83" height="57" fill="#2a150b"/>
   <g filter="url(#bl2)">
    <rect x="-4" y="-4" width="92" height="14" fill="#160c08"/>
    <ellipse cx="6" cy="26" rx="10" ry="10" fill="#6e3d16"/>
    <ellipse cx="76" cy="18" rx="9" ry="7" fill="#6e3a10"/>
    <ellipse cx="64" cy="10" rx="8" ry="5" fill="#3a1c0c"/>
    <ellipse cx="46" cy="50" rx="8" ry="8" fill="#7a4418"/>
    <ellipse cx="80" cy="48" rx="6" ry="10" fill="#42180a"/>
   </g>
   <g filter="url(#bl)">
    <!-- back yellow player -->
    <ellipse cx="44" cy="7" rx="4.5" ry="6" fill="#6a3f22"/>
    <path d="M37 15 L44 12 L52 15 L54 34 L40 36 Z" fill="#d9a63a"/>
    <path d="M52 14 L58 20 L56 24 L51 20Z" fill="#8a5a30"/>
    <!-- right yellow player -->
    <ellipse cx="58" cy="23" rx="4.5" ry="5.5" fill="#241610"/>
    <path d="M50 32 L56 28 L64 28 L72 32 L74 60 L50 60 L52 44 Z" fill="#e9a91f"/>
    <path d="M70 31 L84 33 L84 38 L72 38 Z" fill="#e8a520"/>
    <path d="M54 28 L59 36 L64 28 Z" fill="#3a2214"/>
    <rect x="58" y="44" width="10" height="4" fill="#b8a070" opacity="0.8"/>
    <!-- navy player -->
    <ellipse cx="24.7" cy="10" rx="5.2" ry="6.6" fill="#1c1a1c"/>
    <path d="M14 24 L22 17 L32 16 L40 20 L44 34 L44 60 L20 60 L18 40 Z" fill="#1a1a2c"/>
    <path d="M14 24 L19 22 L20 38 L12 50 L6 48 L10 34 Z" fill="#6e4226"/>
    <path d="M40 22 L46 30 L52 44 L48 48 L42 38 Z" fill="#20202e"/>
    <ellipse cx="13" cy="52" rx="6" ry="6" fill="#8a4a22"/>
    <path d="M20 24 Q30 19 40 25 L39 28.5 Q30 23.5 21 27.5 Z" fill="#b08a84"/>
   </g>
   <text x="25.8" y="38.5" font-family="Liberation Sans,sans-serif" font-weight="bold" font-size="13" fill="#efecec" filter="url(#bl)">3</text>
  </svg>
  <!-- thumb 6: tall poster -->
  <svg class="th" style="left:178px;top:251.5px" width="55.5" height="83" viewBox="0 0 55.5 83">
   <rect width="56" height="83" fill="#16156e"/>
   <g filter="url(#bl)">
    <rect x="-3" y="-3" width="62" height="10" fill="#121258"/>
    <!-- person -->
    <path d="M15.4 27 L19 17 L26 12.5 L35 12.5 L40 17 L42.5 27 L42.5 34 L15.4 34 Z" fill="#3f5f92"/>
    <path d="M24.5 12 L28.5 16 L32 15 L36 12 L37.5 15.5 L33 19 L26 18.5 Z" fill="#b9c3d6"/>
    <ellipse cx="30.5" cy="11.5" rx="4" ry="4.2" fill="#8b7468"/>
    <path d="M25.5 8.6 Q25.5 2.2 30.5 2.2 Q35.6 2.2 35.6 8.6 Z" fill="#1b1b3a"/>
    <rect x="28" y="16.5" width="3.4" height="7" fill="#14141c"/>
    <rect x="42" y="22.5" width="11.5" height="31" fill="#471c34"/>
    <!-- lower dark area -->
    <rect x="-3" y="53" width="62" height="34" fill="#140a0d"/>
    <rect x="-3" y="46" width="46" height="8" fill="#231a3c"/>
    <ellipse cx="10" cy="68" rx="10" ry="10" fill="#3a0d12"/>
    <ellipse cx="38" cy="62" rx="6" ry="5" fill="#2c0b10"/>
    <path d="M51 50 L57 50 L56 86 L47.5 86 Z" fill="#4b2a8c"/>
    <ellipse cx="27" cy="59.5" rx="2.4" ry="2.8" fill="#4c4044"/>
    <path d="M21 66 L27 61.5 L32 65 L32.5 81 L22 81 Z" fill="#2a3142"/>
    <rect x="11" y="79" width="4" height="1.8" fill="#b8b8c0"/><rect x="28.5" y="79" width="8" height="1.8" fill="#a8a8b2"/>
   </g>
   <g filter="url(#bl)" opacity="0.92">
    <g fill="#e8e6ee">
     <rect x="8.5" y="26.5" width="10" height="2.4"/><rect x="8.5" y="31" width="10" height="2.4"/><rect x="8.5" y="35.5" width="10" height="2.4"/>
     <rect x="8.5" y="40" width="10" height="2.4"/><rect x="8.5" y="44.8" width="10" height="2.4"/><rect x="8.5" y="49.5" width="10" height="2.4"/>
    </g>
    <g fill="#9d9bbd">
     <rect x="19.5" y="26.5" width="13" height="2.2"/><rect x="19.5" y="31" width="15" height="2.2"/><rect x="19.5" y="35.5" width="11" height="2.2"/>
     <rect x="19.5" y="40" width="9" height="2.2"/><rect x="19.5" y="44.8" width="21" height="2.2"/><rect x="19.5" y="49.5" width="23" height="2.2"/>
    </g>
    <g fill="#e2bcc6">
     <rect x="44" y="26.5" width="8" height="2.4"/><rect x="44" y="31" width="8" height="2.4"/><rect x="44" y="35.5" width="8" height="2.4"/>
    </g>
    <g fill="#8f86a8"><rect x="44" y="40" width="8" height="2"/><rect x="44" y="44.8" width="8" height="2"/><rect x="44" y="49.5" width="8" height="2"/></g>
   </g>
  </svg>
  <!-- thumb 7: grey jersey arms out -->
  <svg class="th" style="left:262px;top:287px" width="83" height="47" viewBox="0 0 83 47">
   <rect width="83" height="47" fill="#221f25"/>
   <g filter="url(#bl2)">
    <rect x="-4" y="-4" width="92" height="8" fill="#151317"/>
    <ellipse cx="14" cy="13" rx="12" ry="6" fill="#332e3a"/>
    <ellipse cx="64" cy="14" rx="13" ry="6" fill="#3a3446"/>
    <ellipse cx="14" cy="41" rx="12" ry="6" fill="#4a4044"/>
    <ellipse cx="63" cy="38" rx="12" ry="9" fill="#5e5262"/>
    <rect x="77.5" y="-3" width="9" height="54" fill="#16151a"/>
   </g>
   <g filter="url(#bl)" opacity="0.9"><circle cx="71.2" cy="16.6" r="1.3" fill="#5a5a78"/><circle cx="14.6" cy="25.1" r="1.3" fill="#5a5a78"/><circle cx="61.1" cy="7.4" r="1.1" fill="#3f3846"/><circle cx="56.9" cy="21.3" r="1.4" fill="#5a5a78"/><circle cx="4.9" cy="5.9" r="1.6" fill="#5a5a78"/><circle cx="2.3" cy="16.6" r="1.3" fill="#4a4256"/><circle cx="76.8" cy="29.9" r="1.6" fill="#55506a"/><circle cx="24.3" cy="10.7" r="1.1" fill="#3f3846"/><circle cx="8.3" cy="12.3" r="1.0" fill="#3f3846"/><circle cx="65.2" cy="5.0" r="1.1" fill="#3f3846"/><circle cx="20.8" cy="7.2" r="1.2" fill="#3a3440"/><circle cx="58.4" cy="7.9" r="1.1" fill="#3f3846"/><circle cx="0.8" cy="16.6" r="1.3" fill="#5a5a78"/><circle cx="14.5" cy="17.7" r="1.7" fill="#4a4256"/><circle cx="0.0" cy="26.6" r="1.7" fill="#5a5a78"/><circle cx="23.4" cy="27.1" r="1.1" fill="#3a3440"/><circle cx="76.7" cy="20.1" r="1.4" fill="#3f3846"/><circle cx="27.7" cy="36.0" r="1.1" fill="#4a4048"/><circle cx="11.2" cy="37.1" r="1.0" fill="#6a5a58"/><circle cx="8.2" cy="41.9" r="0.9" fill="#544848"/><circle cx="12.3" cy="39.3" r="1.7" fill="#8a7a78"/><circle cx="23.8" cy="34.9" r="1.2" fill="#7b6a68"/><circle cx="10.8" cy="36.2" r="1.4" fill="#7b6a68"/><circle cx="7.0" cy="41.8" r="1.3" fill="#8a7a78"/><circle cx="25.1" cy="41.4" r="1.2" fill="#6a5a58"/><circle cx="5.7" cy="40.2" r="1.1" fill="#8a7a78"/><circle cx="9.4" cy="44.5" r="1.4" fill="#544848"/><circle cx="16.0" cy="46.0" r="1.7" fill="#7b6a68"/><circle cx="8.7" cy="40.8" r="1.6" fill="#4a4048"/><circle cx="4.9" cy="36.0" r="1.6" fill="#6a5a58"/><circle cx="4.7" cy="38.8" r="1.1" fill="#6a5a58"/><circle cx="7.4" cy="38.2" r="1.4" fill="#7b6a68"/><circle cx="5.3" cy="34.9" r="1.3" fill="#544848"/><circle cx="19.4" cy="42.7" r="1.4" fill="#7b6a68"/><circle cx="17.7" cy="45.9" r="1.3" fill="#544848"/><circle cx="20.5" cy="46.5" r="0.9" fill="#6a5a58"/><circle cx="15.1" cy="43.2" r="1.2" fill="#6a5a58"/><circle cx="4.9" cy="40.6" r="1.5" fill="#7b6a68"/><circle cx="22.8" cy="45.8" r="1.2" fill="#8a7a78"/><circle cx="25.5" cy="45.2" r="1.2" fill="#6a5a58"/><circle cx="24.6" cy="41.0" r="1.4" fill="#8a7a78"/><circle cx="12.5" cy="33.2" r="1.0" fill="#6a5a58"/><circle cx="19.0" cy="46.9" r="1.6" fill="#544848"/><circle cx="12.7" cy="43.3" r="1.4" fill="#8a7a78"/><circle cx="14.6" cy="40.6" r="1.3" fill="#4a4048"/><circle cx="63.0" cy="30.8" r="1.5" fill="#6a5a70"/><circle cx="71.1" cy="39.9" r="1.3" fill="#8a7a88"/><circle cx="59.9" cy="29.0" r="1.4" fill="#5a5a80"/><circle cx="54.6" cy="45.0" r="1.4" fill="#6a5a70"/><circle cx="63.5" cy="31.1" r="1.2" fill="#c8b8c0"/><circle cx="55.4" cy="35.0" r="1.5" fill="#a898a4"/><circle cx="73.8" cy="34.1" r="1.4" fill="#c8b8c0"/><circle cx="55.7" cy="28.8" r="1.2" fill="#8a7a88"/><circle cx="69.2" cy="46.0" r="1.1" fill="#a898a4"/><circle cx="53.0" cy="35.9" r="1.6" fill="#6a5a70"/><circle cx="60.3" cy="36.9" r="1.4" fill="#77677a"/><circle cx="72.7" cy="46.6" r="1.3" fill="#8a7a88"/><circle cx="72.4" cy="31.8" r="1.4" fill="#77677a"/><circle cx="69.1" cy="38.0" r="1.1" fill="#5a5a80"/><circle cx="62.3" cy="26.5" r="1.6" fill="#a898a4"/><circle cx="71.0" cy="42.7" r="1.7" fill="#8a7a88"/><circle cx="62.1" cy="39.2" r="1.4" fill="#c8b8c0"/><circle cx="75.9" cy="40.4" r="1.1" fill="#6a5a70"/><circle cx="56.9" cy="41.0" r="1.5" fill="#5a5a80"/><circle cx="69.3" cy="29.8" r="1.1" fill="#c8b8c0"/><circle cx="64.6" cy="45.9" r="1.3" fill="#a898a4"/><circle cx="60.6" cy="42.6" r="1.6" fill="#8a7a88"/><circle cx="61.1" cy="44.7" r="1.2" fill="#6a5a70"/><circle cx="62.2" cy="39.1" r="1.6" fill="#6a5a70"/><circle cx="64.9" cy="39.7" r="1.3" fill="#c8b8c0"/><circle cx="62.5" cy="39.7" r="1.1" fill="#77677a"/><circle cx="73.4" cy="42.8" r="1.6" fill="#8a7a88"/><circle cx="55.8" cy="44.9" r="1.7" fill="#c8b8c0"/><circle cx="64.5" cy="42.6" r="1.2" fill="#77677a"/><circle cx="73.1" cy="33.3" r="1.0" fill="#6a5a70"/><circle cx="59.2" cy="34.8" r="1.1" fill="#8a7a88"/><circle cx="55.9" cy="44.2" r="1.2" fill="#8a7a88"/><circle cx="54.7" cy="33.0" r="1.5" fill="#a898a4"/><circle cx="62.7" cy="47.0" r="1.6" fill="#5a5a80"/><circle cx="72.7" cy="40.5" r="1.7" fill="#6a5a70"/><circle cx="65.6" cy="40.5" r="1.5" fill="#6a5a70"/><circle cx="64.2" cy="32.1" r="1.5" fill="#77677a"/><circle cx="54.4" cy="36.8" r="1.6" fill="#c8b8c0"/></g>
   <g filter="url(#bl)">
    <rect x="50" y="27" width="4.7" height="12" fill="#d8d2d6"/>
    <path d="M30 19 L28 20.3 L13.7 20.8 L13.7 25.3 L28 25.5 L31 23.5 Z" fill="#16161b"/>
    <ellipse cx="9.6" cy="24.3" rx="4.2" ry="2.4" fill="#b08868"/>
    <path d="M27 18 L33 16 L35.5 22 L29 24 Z" fill="#8a6048"/>
    <path d="M48.3 17 L54 18.5 L64 24 L76 29.5 L75 33.5 L62 29.5 L50 23.5 Z" fill="#7c523a"/>
    <ellipse cx="43.2" cy="10.3" rx="3.6" ry="5.2" fill="#4c3226"/>
    <path d="M39.8 11 Q43.2 18 46.6 11 L46.3 14.5 Q43.2 18 40.2 14.5Z" fill="#1f1614"/>
    <path d="M39.8 7.5 Q43.2 3.5 46.6 7.5 L46.4 8.5 Q43.2 6 40 8.5Z" fill="#2a1e1a"/>
    <path d="M31 19.5 L38 15.5 L43 18.5 L47.5 15.5 L49.3 19 L50 50 L30 50 L31.5 30 Z" fill="#aaa38b"/>
    <path d="M30.5 26 L34 24 L33 50 L30 50Z" fill="#8a8260"/>
    <rect x="37.5" y="26" width="9" height="6.5" fill="#bfa042" opacity="0.7"/>
   </g>
  </svg>
<!--THUMBS_END-->
  <div class="lb" style="left:166.7px;top:181.2px;letter-spacing:0.38px">u=433736541,1</div>
<div class="lb" style="left:166.7px;top:196.5px;letter-spacing:0.48px">506447685&amp;fm</div>
<div class="lb" style="left:166.3px;top:211.8px;letter-spacing:1.38px">=11&amp;gp.psd</div>
<div class="lb" style="left:264.0px;top:181.2px;letter-spacing:0.46px">u=1937965569,</div>
<div class="lb" style="left:267.4px;top:196.5px;letter-spacing:0.70px">3462518795&amp;f</div>
<div class="lb" style="left:264.0px;top:211.8px;letter-spacing:0.69px">m=11&amp;.psd</div>
<div class="lb" style="left:361.6px;top:181.2px;letter-spacing:0.49px">u=2033627994,</div>
<div class="lb" style="left:362.4px;top:196.5px;letter-spacing:0.53px">175083493&amp;fm</div>
<div class="lb" style="left:362.7px;top:211.8px;letter-spacing:1.07px">=26&amp;gp.psd</div>
<div class="lb" style="left:459.6px;top:181.2px;letter-spacing:0.49px">u=2406871738,</div>
<div class="lb" style="left:463.1px;top:196.5px;letter-spacing:0.54px">3995937915&amp;f</div>
<div class="lb" style="left:459.6px;top:211.8px;letter-spacing:1.17px">m=11&amp;g.psd</div>
<div class="lb" style="left:557.7px;top:181.2px;letter-spacing:0.43px">u=3543608199,</div>
<div class="lb" style="left:557.7px;top:196.5px;letter-spacing:0.51px">7168678.psd</div>
<div class="lb" style="left:165.8px;top:338.1px;letter-spacing:0.49px">v2-1e84e26ed7</div>
<div class="lb" style="left:165.8px;top:353.0px;letter-spacing:0.36px">5ac2259065388</div>
<div class="lb" style="left:165.8px;top:367.5px;letter-spacing:0.85px">46d011.psd</div>
<div class="lb" style="left:266.9px;top:338.1px;letter-spacing:0.64px">dataUrlIm.psd</div>
</div>
<!-- window frame -->
<div class="abs" style="left:0;top:0;width:651px;height:1px;background:#f1d1d6;"></div>
<div class="abs" style="left:647px;top:0;width:3px;height:514px;background:linear-gradient(to right,rgba(250,215,222,0),rgba(247,195,205,0.5));"></div>
<div class="abs" style="left:650px;top:0;width:1px;height:515px;background:#9a505d;"></div>
<div class="abs" style="left:0;top:513px;width:650px;height:1px;background:#fbe6ea;"></div>
<div class="abs" style="left:0;top:514px;width:651px;height:1px;background:#b43c4a;"></div>
</body>
</html>
